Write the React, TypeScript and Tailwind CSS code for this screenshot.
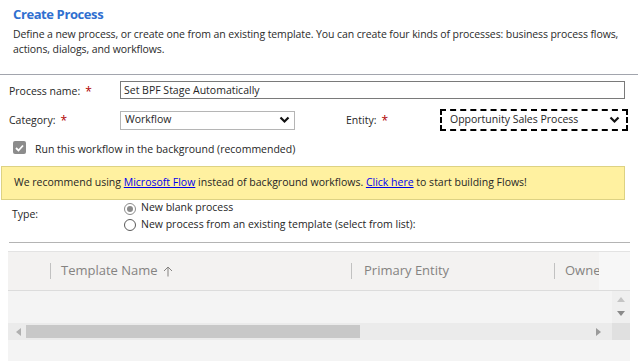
import React from "react";

const font = { fontFamily: '"Open Sans", "Noto Sans", sans-serif' };

function Chevron() {
  return (
    <svg width="11" height="8" viewBox="0 0 11 8" className="shrink-0">
      <path d="M1.5 1.5 L5.5 5.5 L9.5 1.5" fill="none" stroke="#111" strokeWidth="2.2" />
    </svg>
  );
}

function Tri({ dir, color = "#9a9a9a" }: { dir: "up" | "down" | "left" | "right"; color?: string }) {
  const d =
    dir === "up"
      ? "M0 5 L4 0 L8 5 Z"
      : dir === "down"
      ? "M0 0 L8 0 L4 5 Z"
      : dir === "left"
      ? "M5 0 L5 8 L0 4 Z"
      : "M0 0 L5 4 L0 8 Z";
  const w = dir === "up" || dir === "down" ? 8 : 5;
  const h = dir === "up" || dir === "down" ? 5 : 8;
  return (
    <svg width={w} height={h} viewBox={`0 0 ${w} ${h}`}>
      <path d={d} fill={color} />
    </svg>
  );
}

export default function App() {
  return (
    <div className="w-[638px] h-[361px] bg-white overflow-hidden text-[#262626]" style={font}>
      {/* Header */}
      <div className="h-[74px] pl-[13px] pt-[5px]">
        <div className="text-[13px] leading-[19px] font-bold tracking-[-0.4px] text-[#2f6fd0]">Create Process</div>
        <div className="mt-[3px] text-[10.5px] leading-[15px] tracking-[-0.1px] text-[#2b2b2b] whitespace-nowrap">
          Define a new process, or create one from an existing template. You can create four kinds of processes: business process flows,
          <br />
          actions, dialogs, and workflows.
        </div>
      </div>
      <div className="h-[1px] bg-[#a2a5ad]" />

      {/* Process name */}
      <div className="mt-[6px] h-[18px] flex items-center pl-[9px]">
        <div className="w-[111px] flex items-center text-[10.5px] pt-[4px]">
          <span>Process name:</span>
          <span className="ml-[5px] text-[#b00000] text-[12px]">*</span>
        </div>
        <div className="w-[505px] h-[18px] border border-[#7a7a7a] flex items-center pl-[3px] text-[10.5px] leading-none">
          Set BPF Stage Automatically
        </div>
      </div>

      {/* Category / Entity */}
      <div className="mt-[10px] h-[22px] flex items-center pl-[9px]">
        <div className="w-[111px] flex items-center text-[10.5px] pt-[2px]">
          <span>Category:</span>
          <span className="ml-[5px] text-[#b00000] text-[12px]">*</span>
        </div>
        <div className="w-[175px] h-[19px] border border-[#b5b5b5] flex items-center justify-between pl-[4px] pr-[4px] text-[10.5px]">
          <span>Workflow</span>
          <Chevron />
        </div>
        <div className="ml-[51px] w-[94px] flex items-center text-[10.5px] pt-[2px]">
          <span>Entity:</span>
          <span className="ml-[5px] text-[#b00000] text-[12px]">*</span>
        </div>
        <div className="w-[188px] h-[22px] border-2 border-dashed border-black flex items-center justify-between pl-[8px] pr-[6px] text-[10.5px]">
          <span>Opportunity Sales Process</span>
          <Chevron />
        </div>
      </div>

      {/* Checkbox */}
      <div className="mt-[10px] h-[13px] flex items-center pl-[13px]">
        <div className="w-[13px] h-[13px] rounded-[2px] bg-[#8c8c8c] flex items-center justify-center">
          <svg width="9" height="8" viewBox="0 0 9 8">
            <path d="M1 4 L3.5 6.5 L8 1.5" fill="none" stroke="#fff" strokeWidth="1.8" />
          </svg>
        </div>
        <span className="ml-[9px] text-[10.5px] pt-[5px]">Run this workflow in the background (recommended)</span>
      </div>

      {/* Banner */}
      <div className="mt-[12px] ml-[1px] w-[624px] h-[34px] bg-[#fff1a0] border border-[#ddd283] flex items-center pl-[12px] text-[10.5px]">
        <span>
          We recommend using <span className="text-[#0000ee] underline">Microsoft Flow</span> instead of background workflows.{" "}
          <span className="text-[#0000ee] underline">Click here</span> to start building Flows!
        </span>
      </div>

      {/* Type */}
      <div className="mt-[3px] h-[27px] flex pl-[12px]">
        <div className="w-[112px] text-[10.5px] pt-[4px]">Type:</div>
        <div className="flex flex-col text-[10.5px]">
          <div className="h-[13px] flex items-center">
            <div className="w-[12px] h-[12px] rounded-full border border-[#8a8a8a] flex items-center justify-center">
              <div className="w-[6px] h-[6px] rounded-full bg-[#8a8a8a]" />
            </div>
            <span className="ml-[5px] leading-none -mt-[3px]">New blank process</span>
          </div>
          <div className="h-[13px] mt-[4px] flex items-center">
            <div className="w-[12px] h-[12px] rounded-full border border-[#5a5a5a] bg-white" />
            <span className="ml-[5px] leading-none -mt-[2px]">New process from an existing template (select from list):</span>
          </div>
        </div>
      </div>

      <div className="mt-[12px] ml-[9px] w-[621px] h-[1px] bg-[#b4b4b4]" />

      {/* Grid */}
      <div className="mt-[8px] ml-[8px] w-[622px] h-[110px] bg-[#f4f4f4] border-t border-[#e3e3e3] flex flex-col">
        <div className="h-[39px] flex border-b border-[#dcdcdc] shrink-0">
          <div className="w-[591px] bg-[#f3f2f1] flex items-center overflow-hidden text-[13px] text-[#858381] whitespace-nowrap">
            <div className="w-[42px] shrink-0" />
            <div className="w-[301px] shrink-0 flex items-center">
              <div className="w-[1px] h-[16px] bg-[#c1c1c1]" />
              <span className="ml-[10px]">Template Name</span>
              <svg width="10" height="11" viewBox="0 0 10 11" className="ml-[5px] mt-[1px]">
                <path d="M5 10.5 V1 M1 5 L5 1 L9 5" fill="none" stroke="#858381" strokeWidth="1" />
              </svg>
            </div>
            <div className="w-[203px] shrink-0 flex items-center">
              <div className="w-[1px] h-[16px] bg-[#c1c1c1]" />
              <span className="ml-[12px]">Primary Entity</span>
            </div>
            <div className="shrink-0 flex items-center">
              <div className="w-[1px] h-[16px] bg-[#c1c1c1]" />
              <span className="ml-[10px]">Owne</span>
            </div>
          </div>
          <div className="flex-1 bg-[#f7f7f7]" />
        </div>
        <div className="h-[32px] flex shrink-0">
          <div className="flex-1" />
          <div className="w-[18px] bg-[#efefef] flex flex-col items-center pt-[6px] gap-[9px]">
            <Tri dir="up" color="#c4c4c4" />
            <Tri dir="down" color="#8a8a8a" />
          </div>
        </div>
        <div className="h-[17px] flex shrink-0">
          <div className="flex-1 bg-[#ebebeb] flex items-center">
            <div className="w-[18px] flex justify-center pl-[2px]">
              <Tri dir="left" color="#b0b0b0" />
            </div>
            <div className="w-[334px] h-[13px] bg-[#c8c8c8]" />
            <div className="flex-1" />
            <div className="w-[16px] flex justify-start">
              <Tri dir="right" color="#9a9a9a" />
            </div>
          </div>
          <div className="w-[18px] bg-[#e0e0e0]" />
        </div>
        <div className="flex-1" />
      </div>
    </div>
  );
}
